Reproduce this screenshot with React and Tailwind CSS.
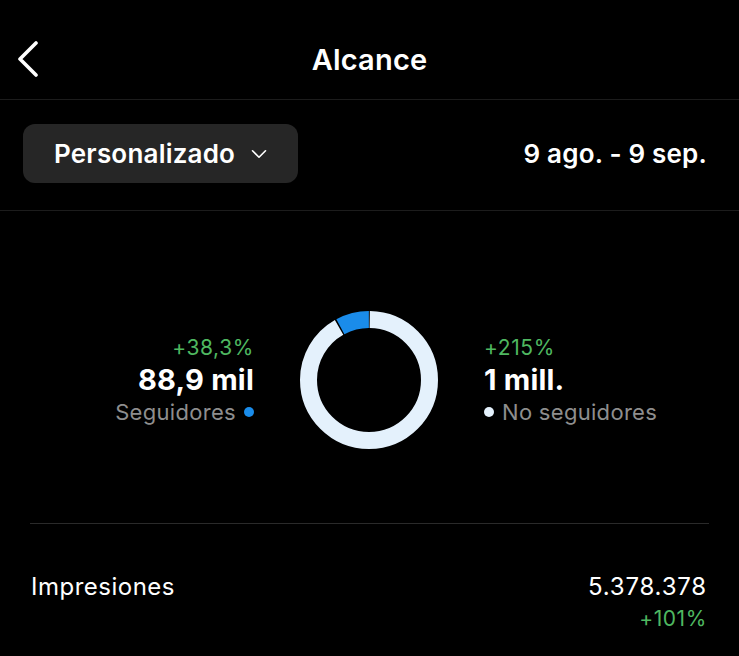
import { ChevronDown } from "lucide-react";

const font = { fontFamily: "Inter, 'Noto Sans', sans-serif" };

const Donut = () => {
  const r = 60.5;
  const c = 2 * Math.PI * r;
  const share = 0.082;
  const gap = 1.5;
  return (
    <svg width="140" height="140" viewBox="0 0 140 140">
      <g transform="rotate(-90 70 70)">
        <circle
          cx="70"
          cy="70"
          r={r}
          fill="none"
          stroke="#e4f1fc"
          strokeWidth="17"
          strokeDasharray={`${c * (1 - share) - gap} ${c}`}
          strokeDashoffset={-gap / 2}
        />
        <circle
          cx="70"
          cy="70"
          r={r}
          fill="none"
          stroke="#1a8cea"
          strokeWidth="17"
          strokeDasharray={`${c * share - gap} ${c}`}
          strokeDashoffset={-(c * (1 - share) + gap / 2)}
        />
      </g>
    </svg>
  );
};

export default function App() {
  return (
    <div className="w-[739px] h-[656px] bg-black text-white overflow-hidden" style={font}>
      {/* cabecera */}
      <div className="relative h-[100px] flex items-center justify-center pt-[20px] border-b border-[#1c1c1c]">
        <svg className="absolute left-[14px] top-[41px]" width="28" height="36" viewBox="0 0 28 36">
          <polyline
            points="22,2 6,18 22,34"
            fill="none"
            stroke="white"
            strokeWidth="3.6"
            strokeLinecap="round"
            strokeLinejoin="round"
          />
        </svg>
        <span className="text-[29px] font-semibold tracking-[0.2px]">Alcance</span>
      </div>

      {/* filtro */}
      <div className="h-[111px] flex items-center justify-between pl-[23px] pr-[32px] border-b border-[#1c1c1c] pb-[4px]">
        <div className="h-[59px] w-[275px] rounded-[12px] bg-[#262626] flex items-center pl-[31px] gap-[11px]">
          <span className="text-[26px] font-semibold tracking-[0.2px]">Personalizado</span>
          <ChevronDown size={26} strokeWidth={1.5} className="mt-[2px]" />
        </div>
        <span className="text-[26px] font-semibold tracking-[0.2px]">9 ago. - 9 sep.</span>
      </div>

      {/* gráfico */}
      <div className="h-[312px] flex items-center justify-center pt-[26px]">
        <div className="w-[254px] flex flex-col items-end">
          <span className="text-[21px] leading-[30px] text-[#4fb860] tracking-[0.6px]">+38,3%</span>
          <span className="text-[29px] leading-[34px] font-bold tracking-[0.2px]">88,9 mil</span>
          <span className="text-[22px] leading-[30px] text-[#8e8e8e] flex items-center gap-[8px] tracking-[0.3px]">
            Seguidores
            <span className="w-[10px] h-[10px] rounded-full bg-[#1a8cea]" />
          </span>
        </div>
        <div className="w-[230px] flex justify-center">
          <Donut />
        </div>
        <div className="w-[255px] flex flex-col items-start">
          <span className="text-[21px] leading-[30px] text-[#4fb860] tracking-[0.6px]">+215%</span>
          <span className="text-[29px] leading-[34px] font-bold tracking-[0.2px]">1 mill.</span>
          <span className="text-[22px] leading-[30px] text-[#8e8e8e] flex items-center gap-[8px] tracking-[0.3px]">
            <span className="w-[10px] h-[10px] rounded-full bg-[#e4f1fc]" />
            No seguidores
          </span>
        </div>
      </div>

      {/* impresiones */}
      <div className="mx-[30px] border-t border-[#2a2a2a] pt-[46px] flex justify-between pr-[2px] pl-[1px]">
        <span className="text-[24px] leading-[34px] tracking-[0.5px]">Impresiones</span>
        <div className="flex flex-col items-end">
          <span className="text-[24px] leading-[34px] tracking-[0.8px]">5.378.378</span>
          <span className="text-[21px] leading-[30px] text-[#4fb860] tracking-[0.6px]">+101%</span>
        </div>
      </div>
    </div>
  );
}
